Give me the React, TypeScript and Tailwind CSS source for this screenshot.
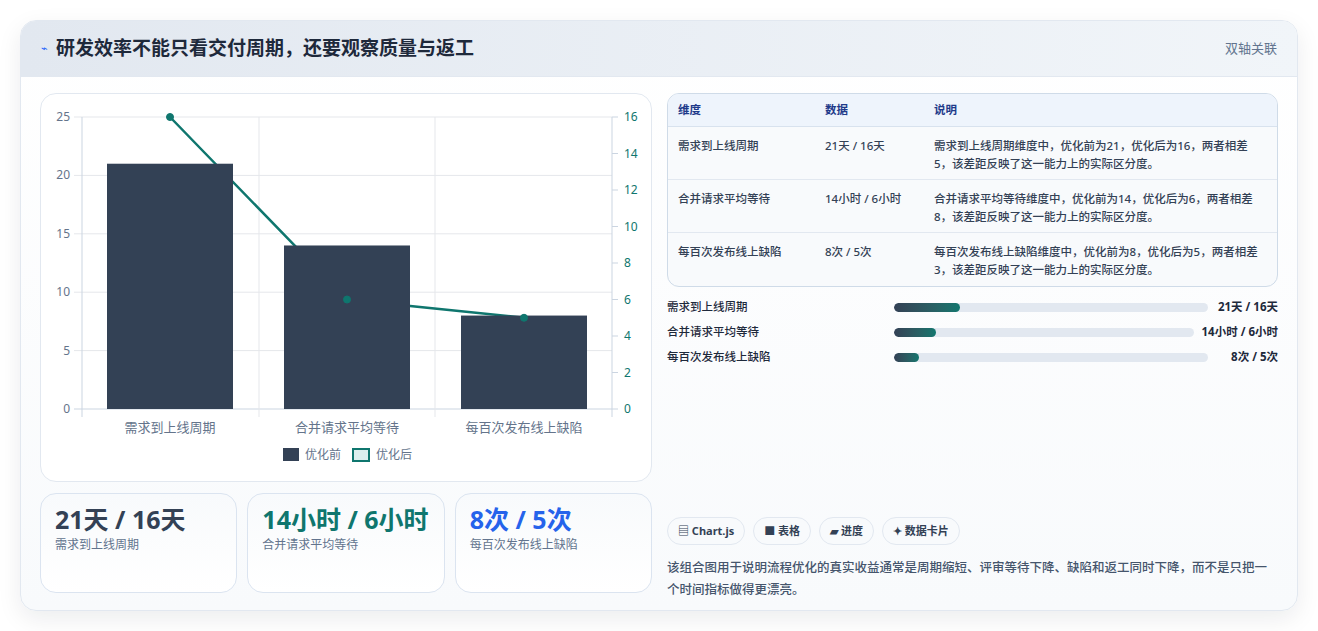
import React from "react";

const F = { fontFamily: '"Noto Sans","Noto Sans CJK SC",sans-serif' };

function Chart() {
  const x0 = 80, x1 = 610, yT = 115, yB = 407;
  const ly = (v: number) => yB - (v / 25) * (yB - yT);
  const ry = (v: number) => yB - (v / 16) * (yB - yT);
  const cats = ["需求到上线周期", "合并请求平均等待", "每百次发布线上缺陷"];
  const before = [21, 14, 8];
  const after = [16, 6, 5];
  const cx = [168, 345, 522];
  return (
    <svg width="612" height="389" viewBox="39 92 612 389" className="block">
      {[0, 5, 10, 15, 20, 25].map((v) => (
        <g key={v}>
          <line x1={x0 - 8} x2={x1} y1={ly(v)} y2={ly(v)} stroke={v === 0 ? "#cbd5e1" : "#e5e7eb"} />
          <text x={68} y={ly(v) + 4} fontSize="12" fill="#64748b" textAnchor="end" style={F}>{v}</text>
        </g>
      ))}
      {[0, 2, 4, 6, 8, 10, 12, 14, 16].map((v) => (
        <g key={v}>
          <line x1={x1} x2={x1 + 6} y1={ry(v)} y2={ry(v)} stroke="#cbd5e1" />
          <text x={622} y={ry(v) + 4} fontSize="12" fill="#0f766e" style={F}>{v}</text>
        </g>
      ))}
      {[80, 257, 433, 610].map((x) => (
        <line key={x} x1={x} x2={x} y1={yT} y2={yB + 8} stroke={x === 80 || x === 610 ? "#cbd5e1" : "#e5e7eb"} />
      ))}
      <polyline points={cx.map((x, i) => `${x},${ry(after[i])}`).join(" ")} fill="none" stroke="#0f766e" strokeWidth="2.5" />
      {before.map((v, i) => (
        <rect key={i} x={cx[i] - 63} y={ly(v)} width="126" height={yB - ly(v)} fill="#334155" />
      ))}
      {cx.map((x, i) => (
        <circle key={i} cx={x} cy={ry(after[i])} r="3.5" fill="#0f766e" stroke="#0f766e" />
      ))}
      {cats.map((c, i) => (
        <text key={c} x={cx[i]} y={430} fontSize="13" fill="#64748b" textAnchor="middle" style={F}>{c}</text>
      ))}
      <rect x="281" y="446" width="16" height="13" fill="#334155" />
      <text x="303" y="457" fontSize="12" fill="#64748b" style={F}>优化前</text>
      <rect x="351" y="447" width="16" height="12" fill="#dcefee" stroke="#0f766e" strokeWidth="2" />
      <text x="374" y="457" fontSize="12" fill="#64748b" style={F}>优化后</text>
    </svg>
  );
}

const rows = [
  ["需求到上线周期", "21天 / 16天", "需求到上线周期维度中，优化前为21，优化后为16，两者相差5，该差距反映了这一能力上的实际区分度。"],
  ["合并请求平均等待", "14小时 / 6小时", "合并请求平均等待维度中，优化前为14，优化后为6，两者相差8，该差距反映了这一能力上的实际区分度。"],
  ["每百次发布线上缺陷", "8次 / 5次", "每百次发布线上缺陷维度中，优化前为8，优化后为5，两者相差3，该差距反映了这一能力上的实际区分度。"],
];

const bars = [
  ["需求到上线周期", "21天 / 16天", 21],
  ["合并请求平均等待", "14小时 / 6小时", 14],
  ["每百次发布线上缺陷", "8次 / 5次", 8],
] as const;

export default function App() {
  return (
    <div className="w-[1318px] h-[631px] bg-white pt-5 pl-5" style={F}>
      <div className="w-[1278px] h-[591px] rounded-2xl border border-slate-200 bg-gradient-to-b from-white to-[#f8fafc] shadow-[0_8px_24px_rgba(15,23,42,0.08)] overflow-hidden">
        <div className="h-14 flex items-center justify-between px-5 bg-gradient-to-r from-[#e2e8f0] to-[#f1f5f9] border-b border-slate-200">
          <div className="flex items-center gap-2">
            <span className="text-[11px] text-blue-600">⌁</span>
            <span className="text-[19px] font-bold text-[#1e293b]">研发效率不能只看交付周期，还要观察质量与返工</span>
          </div>
          <span className="text-[13px] text-slate-500">双轴关联</span>
        </div>
        <div className="flex gap-[15px] px-[19px] pt-4">
          <div className="w-[612px] flex flex-col gap-[11px]">
            <div className="h-[389px] rounded-2xl border border-slate-200 bg-white overflow-hidden"><Chart /></div>
            <div className="flex gap-[10px]">
              {[
                ["21天 / 16天", "需求到上线周期", "text-[#334155]"],
                ["14小时 / 6小时", "合并请求平均等待", "text-[#0f766e]"],
                ["8次 / 5次", "每百次发布线上缺陷", "text-[#2563eb]"],
              ].map(([v, l, c]) => (
                <div key={l} className="flex-1 h-[100px] rounded-2xl border border-[#dbe4f0] bg-gradient-to-b from-[#f8fafc] to-white px-[14px] pt-[10px]">
                  <div className={`text-[25px] font-bold leading-[30px] ${c}`}>{v}</div>
                  <div className="text-[12px] text-slate-500 mt-[2px]">{l}</div>
                </div>
              ))}
            </div>
          </div>
          <div className="w-[612px] flex flex-col">
            <div className="rounded-xl border border-[#cfdbe8] overflow-hidden bg-[#f8fafc] text-[11.5px]">
              <div className="flex h-[33px] items-center bg-[#eef4fc] border-b border-[#d8e2ee] text-[#1e3a8a] font-bold px-[10px]">
                <div className="w-[147px]">维度</div><div className="w-[109px]">数据</div><div className="flex-1">说明</div>
              </div>
              {rows.map((r, i) => (
                <div key={i} className={`flex px-[10px] h-[53px] pt-[10px] text-[#334155] ${i < 2 ? "border-b border-[#e2e8f0]" : ""}`}>
                  <div className="w-[147px] font-medium">{r[0]}</div>
                  <div className="w-[109px] font-medium">{r[1]}</div>
                  <div className="flex-1 leading-[18px] font-medium pr-2">{r[2]}</div>
                </div>
              ))}
            </div>
            <div className="flex flex-col gap-[7px] mt-[11px] text-[11.5px] text-[#1e293b] font-medium">
              {bars.map(([l, v, p]) => (
                <div key={l} className="flex items-center h-[18px]">
                  <div className="w-[227px]">{l}</div>
                  <div className="flex-1 h-[9px] rounded-full bg-[#e2e8f0] overflow-hidden">
                    <div className="h-full rounded-full bg-gradient-to-r from-[#334155] to-[#0f766e]" style={{ width: `${p}%` }} />
                  </div>
                  <div className="ml-2 font-bold text-right min-w-[62px]">{v}</div>
                </div>
              ))}
            </div>
            <div className="flex gap-2 mt-[151px]">
              {["▤ Chart.js", "■ 表格", "▰ 进度", "✦ 数据卡片"].map((c) => (
                <span key={c} className="h-7 px-[10px] rounded-full border border-slate-200 bg-[#f8fafc] text-[11px] font-bold text-[#334155] flex items-center">{c}</span>
              ))}
            </div>
            <p className="mt-3 text-[12.5px] leading-[22px] text-slate-600 font-medium">该组合图用于说明流程优化的真实收益通常是周期缩短、评审等待下降、缺陷和返工同时下降，而不是只把一个时间指标做得更漂亮。</p>
          </div>
        </div>
      </div>
    </div>
  );
}
